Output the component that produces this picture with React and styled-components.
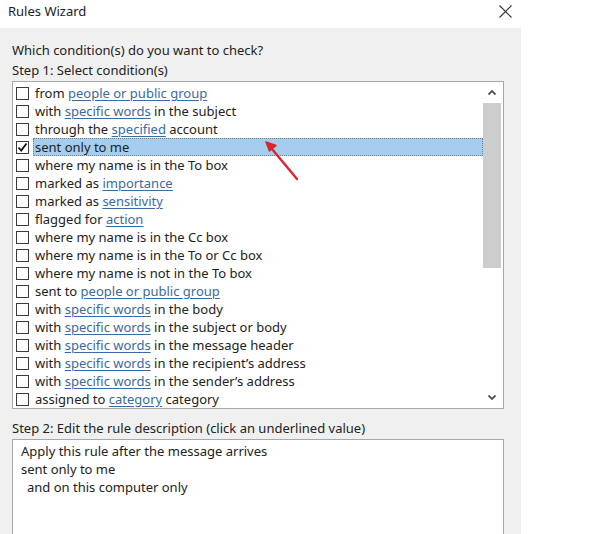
import React from "react";
import styled, { createGlobalStyle } from "styled-components";

const GlobalStyle = createGlobalStyle`
  html, body {
    margin: 0;
    padding: 0;
    background: #fff;
    overflow: hidden;
  }
  body {
    font-family: "Noto Sans", "Open Sans", sans-serif;
    color: #222;
  }
`;

const Window = styled.div`
  position: relative;
  width: 602px;
  height: 534px;
  overflow: hidden;
  background: #fff;
`;

const TitleBar = styled.div`
  display: flex;
  justify-content: space-between;
  align-items: flex-start;
  height: 28px;
  padding: 2px 90px 0 8px;
  box-sizing: border-box;
`;

const Title = styled.div`
  font-size: 13px;
  line-height: 18px;
  color: #222;
`;

const CloseButton = styled.div`
  display: flex;
  width: 14px;
  height: 18px;
  align-items: center;
  justify-content: center;
`;

const Panel = styled.div`
  display: flex;
  flex-direction: column;
  width: 521px;
  height: 540px;
  box-sizing: border-box;
  padding: 12px 17px 0 12px;
  background: #f0f0f0;
`;

const Label = styled.div`
  font-size: 13px;
  line-height: 20px;
  white-space: nowrap;
  margin-top: ${(p) => p.gap || 0}px;
`;

const ListBox = styled.div`
  display: flex;
  flex: none;
  margin-top: 1px;
  height: 328px;
  box-sizing: border-box;
  border: 1px solid #a8a8a8;
  background: #fff;
`;

const Rows = styled.div`
  flex: 1;
  padding: 2px 0 0 3px;
`;

const Row = styled.div`
  display: flex;
  align-items: center;
  height: 18px;
  font-size: 13px;
`;

const Check = styled.span`
  display: flex;
  align-items: center;
  justify-content: center;
  width: 13px;
  height: 13px;
  box-sizing: border-box;
  border: 1px solid #3a3a3a;
  background: #fff;
  flex: none;
`;

const RowText = styled.span`
  flex: 1;
  margin-left: 4px;
  padding: 0 1px;
  height: 18px;
  line-height: 16px;
  box-sizing: border-box;
  white-space: nowrap;
  background: ${(p) => (p.selected ? "#a5cdee" : "transparent")};
  border: 1px dotted ${(p) => (p.selected ? "#6e7f93" : "transparent")};
`;

const Link = styled.span`
  color: #3a6aa3;
  text-decoration: underline;
  text-underline-offset: 2px;
`;

const ScrollBar = styled.div`
  display: flex;
  flex-direction: column;
  align-items: center;
  width: 18px;
  margin-right: 2px;
  background: #fff;
`;

const ArrowBtn = styled.div`
  display: flex;
  align-items: center;
  justify-content: center;
  width: 18px;
  height: 21px;
`;

const Thumb = styled.div`
  width: 18px;
  height: 165px;
  background: #cdcdcd;
`;

const Track = styled.div`
  flex: 1;
`;

const DescBox = styled.div`
  flex: none;
  margin-top: 1px;
  height: 140px;
  padding: 2px 8px;
  border: 1px solid #a8a8a8;
  background: #fff;
  font-size: 13px;
  line-height: 18px;
`;

const Line = styled.div`
  padding-left: ${(p) => (p.indent ? 6 : 0)}px;
`;

const Annotation = styled.svg`
  position: absolute;
  left: 0;
  top: 0;
  pointer-events: none;
`;

const conditions = [
  ["from ", ["people or public group"]],
  ["with ", ["specific words"], " in the subject"],
  ["through the ", ["specified"], " account"],
  ["sent only to me"],
  ["where my name is in the To box"],
  ["marked as ", ["importance"]],
  ["marked as ", ["sensitivity"]],
  ["flagged for ", ["action"]],
  ["where my name is in the Cc box"],
  ["where my name is in the To or Cc box"],
  ["where my name is not in the To box"],
  ["sent to ", ["people or public group"]],
  ["with ", ["specific words"], " in the body"],
  ["with ", ["specific words"], " in the subject or body"],
  ["with ", ["specific words"], " in the message header"],
  ["with ", ["specific words"], " in the recipient\u2019s address"],
  ["with ", ["specific words"], " in the sender\u2019s address"],
  ["assigned to ", ["category"], " category"],
];

const Chevron = ({ up }) => (
  <svg width="10" height="7" viewBox="0 0 10 7">
    <path
      d={up ? "M1.5 5.5 L5 2 L8.5 5.5" : "M1.5 1.5 L5 5 L8.5 1.5"}
      fill="none"
      stroke="#555"
      strokeWidth="1.8"
    />
  </svg>
);

export default function App() {
  return (
    <Window>
      <GlobalStyle />
      <TitleBar>
        <Title>Rules Wizard</Title>
        <CloseButton>
          <svg width="13" height="13" viewBox="0 0 13 13">
            <path d="M0.5 0.5 L12.5 12.5 M12.5 0.5 L0.5 12.5" stroke="#333" strokeWidth="1.1" />
          </svg>
        </CloseButton>
      </TitleBar>
      <Panel>
        <Label>Which condition(s) do you want to check?</Label>
        <Label>Step 1: Select condition(s)</Label>
        <ListBox>
          <Rows>
            {conditions.map((parts, i) => {
              const selected = i === 3;
              return (
                <Row key={i}>
                  <Check>
                    {selected && (
                      <svg width="11" height="11" viewBox="0 0 11 11">
                        <path d="M1.5 5.5 L4.2 8.5 L9.5 1.5" fill="none" stroke="#111" strokeWidth="1.8" />
                      </svg>
                    )}
                  </Check>
                  <RowText selected={selected}>
                    {parts.map((p, j) =>
                      Array.isArray(p) ? <Link key={j}>{p[0]}</Link> : <span key={j}>{p}</span>
                    )}
                  </RowText>
                </Row>
              );
            })}
          </Rows>
          <ScrollBar>
            <ArrowBtn>
              <Chevron up />
            </ArrowBtn>
            <Thumb />
            <Track />
            <ArrowBtn>
              <Chevron />
            </ArrowBtn>
          </ScrollBar>
        </ListBox>
        <Label gap={9}>Step 2: Edit the rule description (click an underlined value)</Label>
        <DescBox>
          <Line>Apply this rule after the message arrives</Line>
          <Line>sent only to me</Line>
          <Line indent>and on this computer only</Line>
        </DescBox>
      </Panel>
      <Annotation width="602" height="534">
        <path d="M297 179 L272 149" stroke="#d9262a" strokeWidth="2.4" strokeLinecap="round" />
        <path d="M266 142 L276 145.5 L269.5 151 Z" fill="#d9262a" stroke="#d9262a" strokeWidth="1.5" strokeLinejoin="round" />
      </Annotation>
    </Window>
  );
}
